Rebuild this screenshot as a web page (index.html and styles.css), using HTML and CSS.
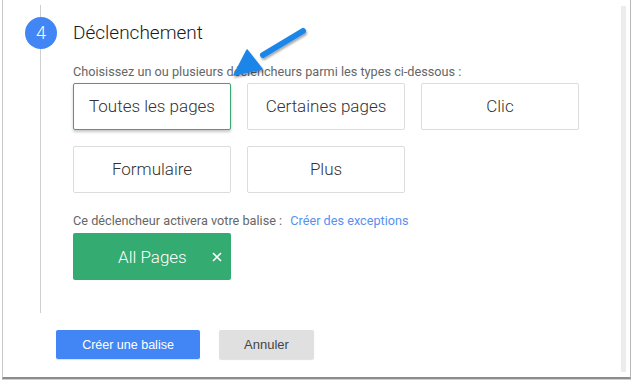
FILE: index.html
```html
<html>
  <head>
    <meta charset="utf-8" />
    <title>Déclenchement</title>
    <link rel="stylesheet" href="styles.css">
  </head>
  <body>
    <div class="window">
      <div class="content">
        <div class="step">
          <div class="rail">
            <div class="rail-line top"></div>
            <div class="step-number">4</div>
            <div class="rail-line"></div>
          </div>
          <div class="step-body">
            <h2 class="step-title">Déclenchement</h2>
            <p class="hint">Choisissez un ou plusieurs déclencheurs parmi les types ci-dessous :</p>
            <div class="trigger-grid">
              <button class="trigger selected">Toutes les pages</button>
              <button class="trigger">Certaines pages</button>
              <button class="trigger">Clic</button>
              <button class="trigger">Formulaire</button>
              <button class="trigger">Plus</button>
            </div>
            <p class="hint fires">Ce déclencheur activera votre balise : <a class="link" href="#">Créer des exceptions</a></p>
            <div class="chip">
              <span class="chip-label">All Pages</span>
              <svg class="chip-close" width="10" height="10" viewBox="0 0 10 10">
                <path d="M1 1 L9 9 M9 1 L1 9" stroke="#fff" stroke-width="1.6" fill="none" />
              </svg>
            </div>
          </div>
        </div>
        <div class="actions">
          <button class="btn primary">Créer une balise</button>
          <button class="btn">Annuler</button>
        </div>
        <svg class="callout" width="90" height="60" viewBox="0 0 90 60">
          <defs>
            <filter id="shade" x="-20%" y="-20%" width="150%" height="150%">
              <feDropShadow dx="1" dy="2" stdDeviation="1.2" flood-color="#000" flood-opacity="0.35" />
            </filter>
          </defs>
          <g filter="url(#shade)">
            <path d="M74 5 L34 29" stroke="#1f86e8" stroke-width="6" stroke-linecap="round" fill="none" />
            <path d="M5 49 L18 24 L33 43 Z" fill="#1f86e8" stroke="#1f86e8" stroke-width="1.5" stroke-linejoin="round" />
          </g>
        </svg>
      </div>
      <div class="scroll"></div>
    </div>
  </body>
</html>
```

FILE: styles.css
```css
* {
  box-sizing: border-box;
  margin: 0;
  padding: 0;
}

body {
  background: #fff;
  font-family: Roboto, 'Noto Sans', sans-serif;
}

.window {
  display: flex;
  margin-left: 2px;
  width: 629px;
  height: 379px;
  border-left: 1px solid #c8c8c8;
  border-right: 1px solid #b8b8b8;
  border-bottom: 2px solid #8c8c8c;
  box-shadow: 0 1px 0 #d0d0d0;
}

.content {
  position: relative;
  flex: 1;
  padding-top: 5px;
}

.scroll {
  width: 5px;
  margin: 6px 4px 5px 0;
  background: #ececec;
}

.step {
  display: flex;
  height: 308px;
}

.rail {
  display: flex;
  flex-direction: column;
  width: 70px;
}

.rail-line {
  flex: 1;
  width: 1px;
  margin-left: 37px;
  background: #cfcfcf;
}

.rail-line.top {
  flex: none;
  height: 12px;
}

.step-number {
  width: 32px;
  height: 32px;
  margin-left: 22px;
  border-radius: 50%;
  background: #4285f4;
  color: #fff;
  font-size: 18px;
  font-weight: 300;
  line-height: 32px;
  text-align: center;
}

.step-body {
  padding-top: 16px;
}

.step-title {
  font-size: 19px;
  font-weight: 300;
  line-height: 24px;
  color: #1a1a1a;
}

.hint {
  margin-top: 19px;
  font-size: 12.7px;
  line-height: 16px;
  color: #666;
}

.trigger-grid {
  display: grid;
  grid-template-columns: repeat(3, 158px);
  grid-auto-rows: 47px;
  gap: 16px;
  margin-top: 3px;
}

.trigger {
  background: #fff;
  border: 1px solid #dcdcdc;
  border-radius: 2px;
  font-family: Roboto, sans-serif;
  font-size: 17px;
  font-weight: 300;
  color: #333;
  padding-bottom: 2px;
}

.trigger.selected {
  border-color: #3aa672;
  box-shadow: 0 2px 3px rgba(0, 0, 0, 0.22);
}

.fires {
  margin-top: 20px;
}

.link {
  margin-left: 5px;
  color: #5a8ff0;
  text-decoration: none;
}

.chip {
  display: flex;
  align-items: center;
  width: 158px;
  height: 47px;
  margin-top: 4px;
  padding-left: 45px;
  background: #33ab71;
  border-radius: 2px;
  color: #fff;
}

.chip-label {
  font-size: 17px;
  font-weight: 300;
}

.chip-close {
  margin-left: 25px;
}

.actions {
  display: flex;
  gap: 19px;
  padding: 17px 0 0 53px;
}

.btn {
  width: 95px;
  height: 29px;
  border: none;
  border-radius: 2px;
  background: #e0e0e0;
  color: #444;
  font-family: 'Liberation Sans', Arial, sans-serif;
  font-size: 13px;
  box-shadow: 0 1px 1px rgba(0, 0, 0, 0.12);
}

.btn.primary {
  width: 144px;
  background: #4285f4;
  color: #fff;
  font-size: 12.5px;
}

.callout {
  position: absolute;
  left: 226px;
  top: 26px;
}
```
